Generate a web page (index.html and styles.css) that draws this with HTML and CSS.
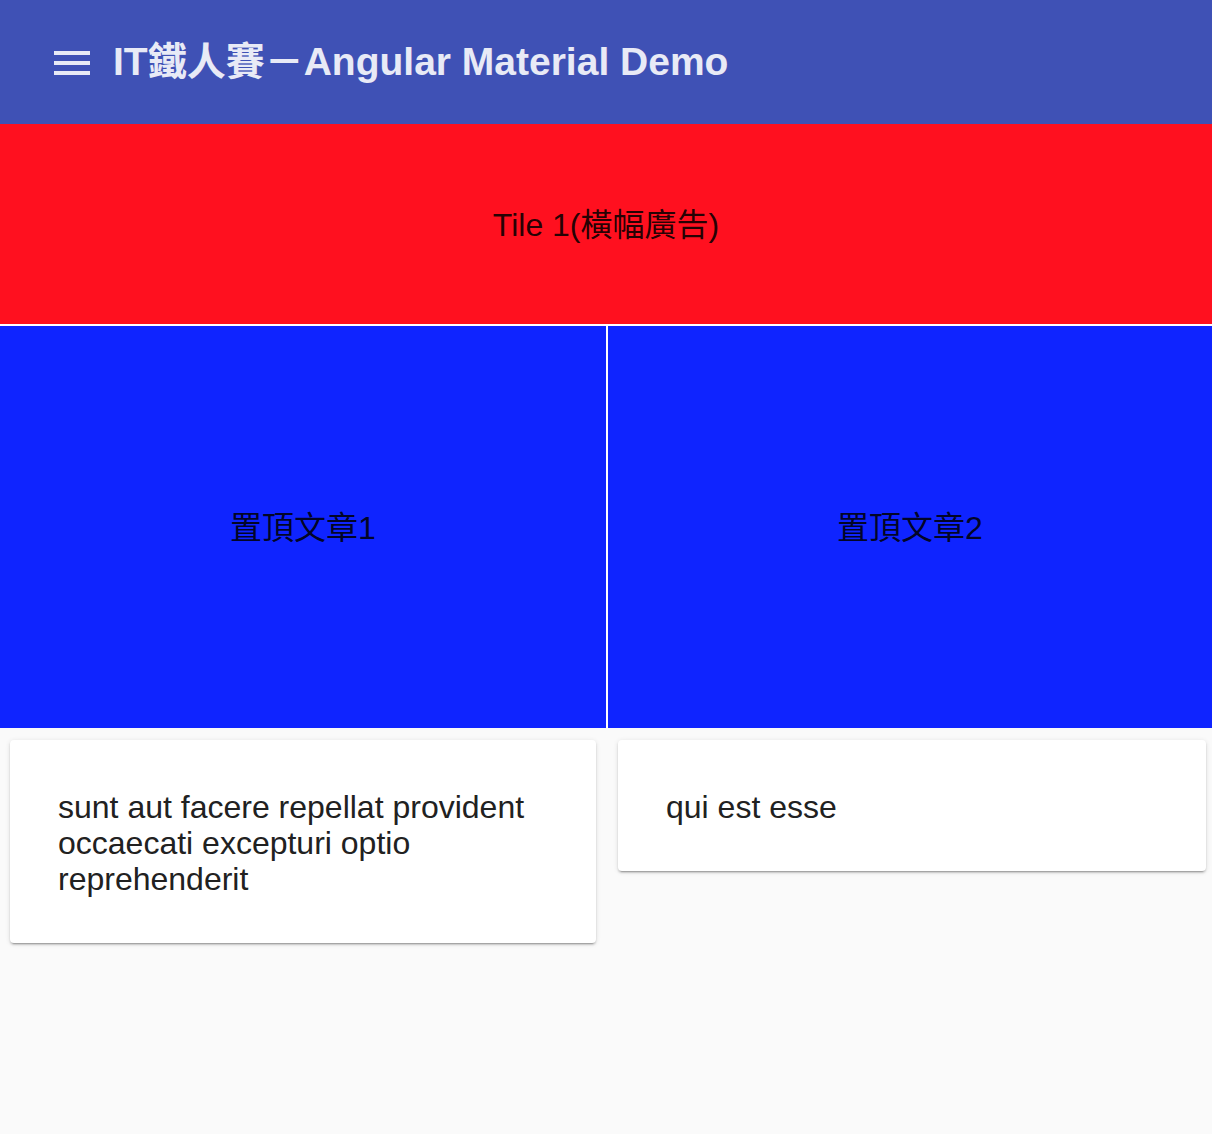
FILE: index.html
```html
<!DOCTYPE html>
<html lang="zh-Hant">
<head>
<meta charset="utf-8">
<title>IT鐵人賽－Angular Material Demo</title>
<link rel="stylesheet" href="styles.css">
</head>
<body>
<header class="toolbar">
  <svg class="menu-icon" width="36" height="24" viewBox="0 0 36 24" aria-hidden="true">
    <rect x="0" y="0" width="36" height="4" fill="#e8eaf6"/>
    <rect x="0" y="10" width="36" height="4" fill="#e8eaf6"/>
    <rect x="0" y="20" width="36" height="4" fill="#e8eaf6"/>
  </svg>
  <span class="title">IT鐵人賽－Angular Material Demo</span>
</header>
<main>
  <section class="grid-list">
    <div class="tile tile-banner">Tile 1(橫幅廣告)</div>
    <div class="tile tile-top">置頂文章1</div>
    <div class="tile tile-top">置頂文章2</div>
  </section>
  <section class="cards">
    <div class="card card-left">sunt aut facere repellat provident occaecati excepturi optio reprehenderit</div>
    <div class="card card-right">qui est esse</div>
  </section>
</main>
</body>
</html>
```
FILE: styles.css
```css
html, body {
  margin: 0;
  padding: 0;
}
body {
  background: #fafafa;
  font-family: "Liberation Sans", Arial, "Noto Sans CJK TC", sans-serif;
  color: rgba(0, 0, 0, 0.87);
  min-height: 1134px;
}
.toolbar {
  height: 124px;
  background: #3f51b5;
  display: flex;
  align-items: center;
  padding-left: 54px;
  box-sizing: border-box;
}
.menu-icon {
  display: block;
  margin-top: 2px;
  flex: none;
}
.title {
  margin-left: 23px;
  margin-bottom: 8px;
  font-size: 39px;
  font-weight: bold;
  color: #e8eaf6;
  white-space: nowrap;
}
.grid-list {
  display: grid;
  grid-template-columns: 606px 1fr;
  grid-template-rows: 200px 200px 200px;
  gap: 2px;
  background: #fff;
}
.tile {
  display: flex;
  align-items: center;
  justify-content: center;
  font-size: 32px;
  color: rgba(0, 0, 0, 0.87);
  padding-bottom: 5px;
}
.tile-banner {
  grid-column: 1 / 3;
  background: #ff101f;
}
.tile-top {
  grid-row: 2 / 4;
  background: #0f24ff;
}
.cards {
  display: grid;
  grid-template-columns: 586px 588px;
  column-gap: 22px;
  align-items: start;
  padding: 12px 0 0 10px;
}
.card {
  background: #fff;
  border-radius: 4px;
  box-shadow: 0 3px 1px -2px rgba(0,0,0,.2), 0 2px 2px 0 rgba(0,0,0,.14), 0 1px 5px 0 rgba(0,0,0,.12);
  padding: 49px 48px 46px;
  font-size: 32px;
  line-height: 36px;
  color: #212121;
}
```
